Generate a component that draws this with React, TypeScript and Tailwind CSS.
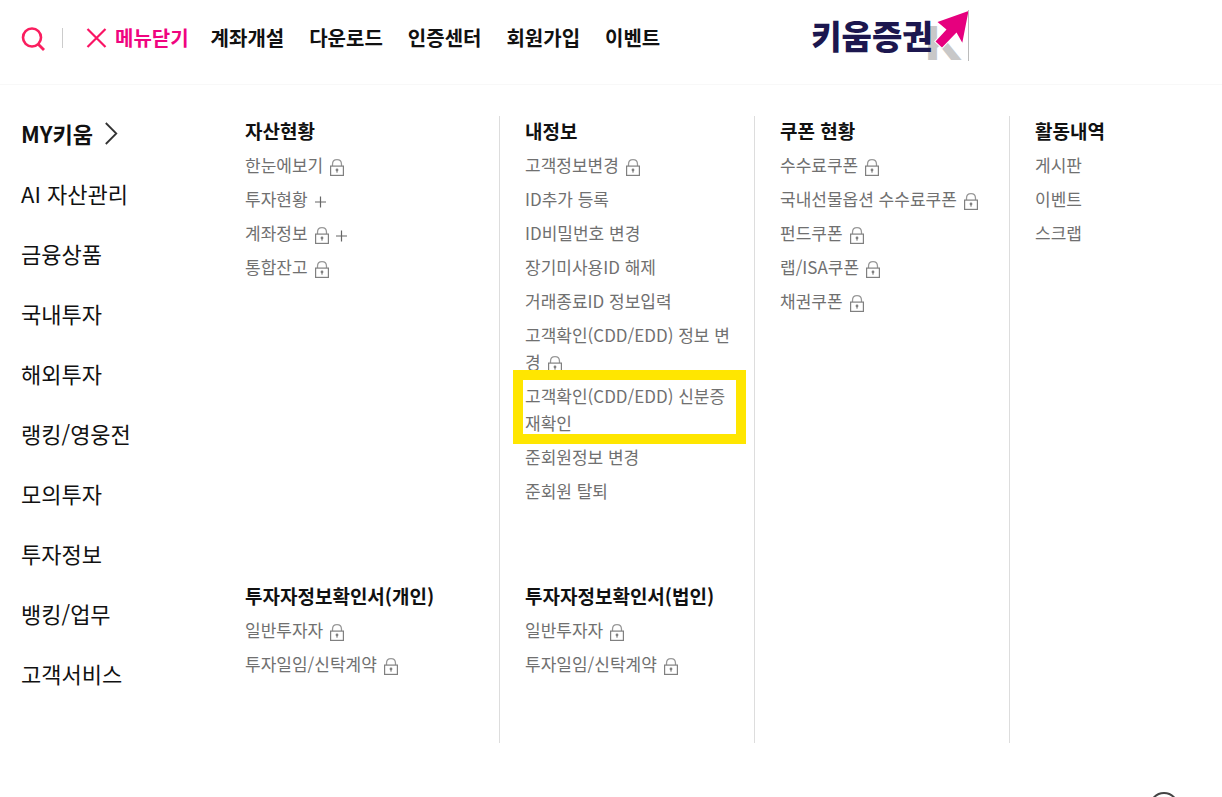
import type { ReactNode } from 'react'

type MenuItem = {
  label: string
  lock?: boolean
  plus?: boolean
  marked?: boolean
}

type MenuSection = {
  title: string
  items: MenuItem[]
}

const topLinks = ['계좌개설', '다운로드', '인증센터', '회원가입', '이벤트']

const categories = [
  'AI 자산관리',
  '금융상품',
  '국내투자',
  '해외투자',
  '랭킹/영웅전',
  '모의투자',
  '투자정보',
  '뱅킹/업무',
  '고객서비스',
]

const columns: MenuSection[][] = [
  [
    {
      title: '자산현황',
      items: [
        { label: '한눈에보기', lock: true },
        { label: '투자현황', plus: true },
        { label: '계좌정보', lock: true, plus: true },
        { label: '통합잔고', lock: true },
      ],
    },
    {
      title: '투자자정보확인서(개인)',
      items: [
        { label: '일반투자자', lock: true },
        { label: '투자일임/신탁계약', lock: true },
      ],
    },
  ],
  [
    {
      title: '내정보',
      items: [
        { label: '고객정보변경', lock: true },
        { label: 'ID추가 등록' },
        { label: 'ID비밀번호 변경' },
        { label: '장기미사용ID 해제' },
        { label: '거래종료ID 정보입력' },
        { label: '고객확인(CDD/EDD) 정보 변경', lock: true },
        { label: '고객확인(CDD/EDD) 신분증 재확인', marked: true },
        { label: '준회원정보 변경' },
        { label: '준회원 탈퇴' },
      ],
    },
    {
      title: '투자자정보확인서(법인)',
      items: [
        { label: '일반투자자', lock: true },
        { label: '투자일임/신탁계약', lock: true },
      ],
    },
  ],
  [
    {
      title: '쿠폰 현황',
      items: [
        { label: '수수료쿠폰', lock: true },
        { label: '국내선물옵션 수수료쿠폰', lock: true },
        { label: '펀드쿠폰', lock: true },
        { label: '랩/ISA쿠폰', lock: true },
        { label: '채권쿠폰', lock: true },
      ],
    },
  ],
  [
    {
      title: '활동내역',
      items: [{ label: '게시판' }, { label: '이벤트' }, { label: '스크랩' }],
    },
  ],
]

function LockIcon() {
  return (
    <svg className="inline-block ml-1.5 align-[-4px]" width="15" height="17" viewBox="0 0 15 17" fill="none" role="img" aria-label="로그인 필요">
      <path d="M3.500 7V5.300C3.500 2.600 5.400.7 8 .7s4.500 1.900 4.500 4.600V7" stroke="#999" strokeWidth="1.300" />
      <rect x="1.600" y="7.100" width="12.800" height="9.300" stroke="#808080" strokeWidth="1.200" />
      <circle cx="8" cy="11" r="1.400" fill="#808080" />
      <path d="M8 11v2.800" stroke="#808080" />
    </svg>
  )
}

function PlusIcon() {
  return (
    <svg className="inline-block ml-1.5 align-[-2px]" width="13" height="12" viewBox="0 0 13 12" fill="none" aria-hidden="true">
      <path d="M6.500 .5v11M1 6h11" stroke="#666" strokeWidth="1.200" />
    </svg>
  )
}

function Logo() {
  return (
    <a href="#" className="flex items-start" aria-label="키움증권 홈">
      <span className="relative z-10 text-[33px] leading-[50px] font-black text-[#1c174f]">키움증권</span>
      <svg className="-mb-3 -ml-2" width="46" height="64" viewBox="0 0 46 64" aria-hidden="true">
        <text x="1" y="49" fontFamily="Liberation Sans, sans-serif" fontWeight="700" fontSize="47" fill="#c8c8c8" stroke="#c8c8c8" strokeWidth="2">K</text>
        <path d="M43.500 1 12.500 12 21.500 19.500 10.500 31.500l6.500 6L31.500 22.500l5.800 10.200Z" fill="#e6007e" stroke="#fff" strokeWidth="2" paintOrder="stroke" />
        <path d="M43.500 0v51" stroke="#bbb" />
      </svg>
    </a>
  )
}

function Section({ section }: { section: MenuSection }) {
  return (
    <section className="flex flex-col gap-[5px]">
      <h2 className="text-[19px] leading-[30px] font-bold text-[#111]">{section.title}</h2>
      <ul className="flex flex-col gap-[7px] text-[17px] leading-[27px] text-[#707070]">
        {section.items.map(item => (
          <li key={item.label} className="relative">
            <a href="#" className="hover:underline">
              {item.label}
              {item.lock && <LockIcon />}
              {item.plus && <PlusIcon />}
            </a>
            {item.marked && (
              <span className="pointer-events-none absolute -top-3 -right-4 -bottom-2 -left-3 border-[10px] border-[#ffe600]" />
            )}
          </li>
        ))}
      </ul>
    </section>
  )
}

function NavLink({ children }: { children: ReactNode }) {
  return <a href="#" className="whitespace-nowrap hover:text-[#f0047f]">{children}</a>
}

export default function App() {
  return (
    <div lang="ko" className="min-h-screen bg-white font-['Noto_Sans_CJK_KR',sans-serif] text-[#111]">

      {/* Top bar */}
      <header className="flex items-start border-b border-[#f8f8f8] pt-2.5 pb-[22px] pl-[21px]">
        <div className="flex h-[52px] items-center pt-1 text-[20px] font-bold">
          <button type="button" aria-label="검색" className="pt-0.5">
            <svg width="24" height="24" viewBox="0 0 24 24" fill="none">
              <circle cx="11" cy="10.500" r="9" stroke="#fa1e5f" strokeWidth="2.600" />
              <path d="m17 17 6 6" stroke="#fa1e5f" strokeWidth="2.800" />
            </svg>
          </button>
          <span className="ml-[17px] h-5 w-px bg-[#ccc]" />
          <button type="button" className="ml-[23px] flex items-center gap-2 whitespace-nowrap text-[#f0047f]">
            <svg width="21" height="20" viewBox="0 0 21 20" fill="none" aria-hidden="true">
              <path d="m1.500 1 18 18M19.500 1l-18 18" stroke="#fa1464" strokeWidth="2.200" />
            </svg>
            메뉴닫기
          </button>
          <nav className="ml-[22px] flex gap-[25px]">
            {topLinks.map(label => <NavLink key={label}>{label}</NavLink>)}
          </nav>
        </div>
        <div className="ml-[151px]">
          <Logo />
        </div>
      </header>

      {/* Full menu */}
      <div className="flex pt-[31px]">
        <nav className="w-[245px] shrink-0 pt-px pl-[21px] text-[22px] leading-8">
          <ul className="flex flex-col gap-7">
            <li>
              <a href="#" className="flex items-center gap-3 font-bold">
                MY키움
                <svg width="14" height="24" viewBox="0 0 14 24" fill="none" aria-hidden="true">
                  <path d="m.8 2 10.500 10.500L.8 23" stroke="#333" strokeWidth="1.800" />
                </svg>
              </a>
            </li>
            {categories.map(label => (
              <li key={label}><a href="#">{label}</a></li>
            ))}
          </ul>
        </nav>

        <div className="grid min-h-[627px] flex-1 grid-cols-[255fr_255fr_255fr_212fr]">
          {columns.map((sections, i) => (
            <div
              key={i}
              className="grid grid-rows-[465px_auto] border-r border-[#ddd] pr-6 pl-[25px] first:pl-0 last:border-r-0"
            >
              {sections.map(s => <Section key={s.title} section={s} />)}
            </div>
          ))}
        </div>
      </div>

      {/* Floating button, mostly tucked under the lower edge */}
      <button
        type="button"
        aria-label="맨 위로"
        className="fixed right-[43px] -bottom-[25px] size-[30px] rounded-full border-2 border-[#444] bg-white"
      />
    </div>
  )
}
